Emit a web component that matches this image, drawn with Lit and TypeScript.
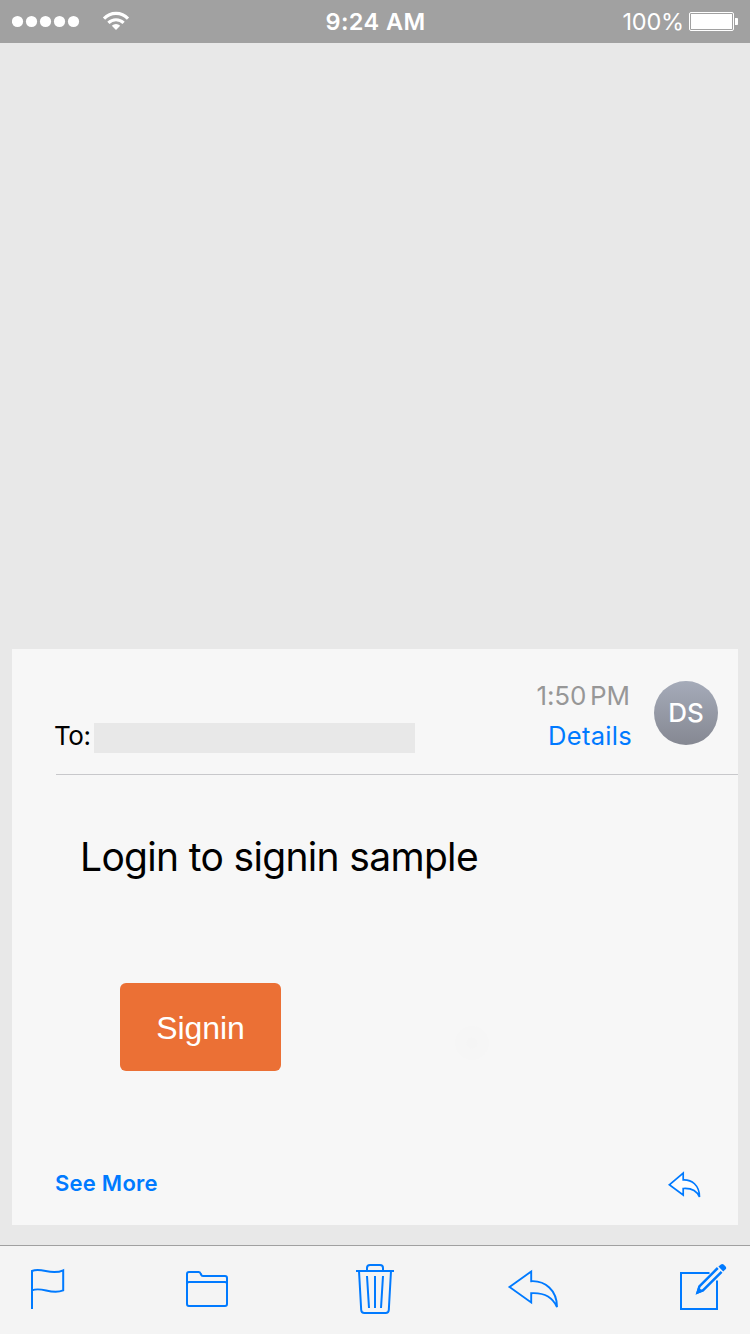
import { LitElement, html, css, svg } from "lit";
import { customElement } from "lit/decorators.js";

@customElement("status-bar")
class StatusBar extends LitElement {
  static styles = css`
    :host {
      display: grid;
      grid-template-columns: 1fr auto 1fr;
      align-items: center;
      height: 43px;
      background: #a1a1a1;
      color: #fff;
      font: 400 24px/43px Inter, "Noto Sans", sans-serif;
    }
    svg { display: block; }
    .left { display: flex; align-items: center; gap: 22px; padding-left: 12px; }
    .time { padding: 1px 0 0 1px; font-weight: 580; font-size: 23.5px; line-height: 42px; letter-spacing: 0.4px; }
    .right { display: flex; align-items: center; justify-content: flex-end; gap: 5px; padding-right: 11px; }
    .percent { padding-top: 1px; font-size: 23.5px; line-height: 42px; letter-spacing: -0.2px; }
  `;

  render() {
    return html`
      <div class="left">
        <svg width="68" height="43" viewBox="12 0 68 43" fill="#fff">
          ${[17.5, 31.5, 45.5, 59.5, 73.5].map((x) => svg`<circle cx=${x} cy="21.5" r="5.6" />`)}
        </svg>
        <svg width="28" height="43" viewBox="102 0 28 43" fill="none" stroke="#fff" stroke-width="3.1">
          <path d="M104 18.6A16.4 16.4 0 0 1 128 18.6" />
          <path d="M108.4 22.9A10.6 10.6 0 0 1 123.6 22.9" />
          <path d="M116 30L111.8 25.7A6 6 0 0 1 120.2 25.7Z" fill="#fff" stroke="none" />
        </svg>
      </div>
      <div class="time">9:24 AM</div>
      <div class="right">
        <span class="percent">100%</span>
        <svg width="50" height="43" viewBox="689 0 50 43">
          <rect x="689.5" y="12.5" width="44" height="18" rx="1.5" fill="none" stroke="#fff" />
          <rect x="691" y="14" width="41" height="15" fill="#fff" />
          <path d="M735 18h2.2q.8 0 .8.8v5.4q0 .8-.8.8H735z" fill="#fff" />
        </svg>
      </div>
    `;
  }
}

@customElement("mail-card")
class MailCard extends LitElement {
  static styles = css`
    :host {
      position: relative;
      display: flex;
      flex-direction: column;
      box-sizing: border-box;
      height: 576px;
      margin: 0 12px 20px;
      background: #f7f7f7;
      color: #000;
      font-family: Inter, "Noto Sans", sans-serif;
    }
    .header {
      display: flex;
      box-sizing: border-box;
      height: 126px;
      margin-left: 44px;
      padding: 27px 20px 0 0;
      border-bottom: 1px solid #c8c8cb;
      font-size: 26px;
      line-height: 40px;
    }
    .to { display: flex; flex: 1; align-items: center; height: 40px; margin: 40px 0 0 -2px; }
    .label { width: 40px; letter-spacing: -0.4px; }
    .redacted { width: 321px; height: 30px; margin-top: 4px; background: #e8e8e8; }
    .meta { text-align: right; margin-right: 22px; }
    .sent { color: #979797; letter-spacing: -0.1px; word-spacing: -3.4px; padding-right: 2px; }
    .details { color: #007aff; font-size: 25.5px; letter-spacing: 0.3px; }
    .avatar {
      width: 64px;
      height: 64px;
      margin-top: 5px;
      border-radius: 50%;
      background: linear-gradient(#a5abb9, #858892);
      color: #fff;
      font-weight: 500;
      line-height: 64px;
      text-align: center;
    }
    .body { display: flex; flex-direction: column; align-items: flex-start; }
    .subject { margin: 57px 0 0 68px; font-size: 39px; line-height: 50px; letter-spacing: -0.67px; }
    .signin {
      box-sizing: border-box;
      width: 161px;
      height: 88px;
      margin: 101px 0 0 108px;
      padding-top: 1px;
      border-radius: 6px;
      background: #eb7035;
      color: #fff;
      font: 32px/89px "Liberation Sans", Arial, sans-serif;
      letter-spacing: -0.1px;
      text-align: center;
    }
    .touch {
      position: absolute;
      left: 443px;
      top: 377px;
      width: 34px;
      height: 34px;
      border-radius: 50%;
      background: radial-gradient(circle, #f5f5f5 5px, #f6f6f6 6px);
    }
    .footer {
      display: flex;
      align-items: center;
      justify-content: space-between;
      height: 40px;
      margin: auto 36px 22px 43px;
      color: #007aff;
      font-size: 22px;
      font-weight: 580;
      line-height: 40px;
    }
    .more { letter-spacing: 0.25px; }
    svg { display: block; }
  `;

  render() {
    return html`
      <div class="header">
        <div class="to"><span class="label">To:</span><span class="redacted"></span></div>
        <div class="meta">
          <div class="sent">1:50 PM</div>
          <div class="details">Details</div>
        </div>
        <div class="avatar">DS</div>
      </div>
      <div class="body">
        <div class="subject">Login to signin sample</div>
        <div class="signin">Signin</div>
      </div>
      <div class="touch"></div>
      <div class="footer">
        <span class="more">See More</span>
        <svg width="36" height="40" viewBox="666 1163 36 40" fill="#fdfdfd" stroke="#007aff" stroke-width="1.7">
          <path d="M669.3 1184.8L683.2 1173V1179.8C691.5 1179.4 699.5 1185 699.5 1197C696.5 1190 690.5 1188 683.2 1188.5V1195Z" />
        </svg>
      </div>
    `;
  }
}

@customElement("mail-toolbar")
class MailToolbar extends LitElement {
  static styles = css`
    :host {
      display: grid;
      grid-template-columns: 155px 170px 152px 172px auto;
      box-sizing: border-box;
      height: 89px;
      padding-left: 28px;
      border-top: 1px solid #a0a0a0;
      background: #f4f4f4;
    }
    svg { display: block; fill: none; stroke: #007aff; stroke-width: 2; }
    .solid { fill: #007aff; stroke: none; }
    .thin { stroke-width: 1.9; }
    .pencil { stroke-width: 2.5; }
  `;

  render() {
    return html`
      <svg width="40" height="88" viewBox="28 1246 40 88">
        <path d="M32 1309V1271C42 1267 51 1276 63.2 1270.3V1290.4C51 1295.5 42 1286 32 1290.4" />
      </svg>
      <svg width="48" height="88" viewBox="183 1246 48 88">
        <path d="M187 1304V1274Q187 1272 189 1272H198.5Q200 1272 200.6 1273.5L201.3 1275Q201.8 1276 203.5 1276H225Q227 1276 227 1278V1304Q227 1306 225 1306H189Q187 1306 187 1304ZM187 1284Q187 1282 189 1282H225Q227 1282 227 1284" />
      </svg>
      <svg width="44" height="88" viewBox="353 1246 44 88">
        <path d="M356 1271H394M367 1271V1268Q367 1265 370 1265H380Q383 1265 383 1268V1271M359 1271L361.2 1310Q361.4 1313 364.4 1313H385.6Q388.6 1313 388.8 1310L391 1271M367 1276L369 1308M375 1276V1308M383 1276L381 1308" />
      </svg>
      <svg class="thin" width="56" height="88" viewBox="505 1246 56 88">
        <path d="M509.5 1287L531.2 1271.5V1281.2C545 1280.5 557 1290 557 1307C552 1296 543 1292.5 531.2 1293.2V1302.5Z" />
      </svg>
      <svg width="52" height="88" viewBox="677 1246 52 88">
        <path d="M709.5 1273H681V1309H717V1280.5" />
        <path class="pencil" d="M717.8 1268L699.4 1286.4L697.8 1292.2L703.2 1290.2L721.6 1271.8" />
        <path class="solid" d="M698.5 1286L695.5 1294.7L703.8 1291.2L701.4 1290L699.8 1288.4ZM718.4 1266.6L720.9 1264.5Q722.2 1263.5 723.6 1264.5L725.6 1266.5Q726.8 1267.9 725.6 1269.3L723.2 1271.5Z" />
      </svg>
    `;
  }
}

@customElement("app-root")
class AppRoot extends LitElement {
  static styles = css`
    :host {
      display: flex;
      flex-direction: column;
      height: 1334px;
      background: #e8e8e8;
    }
    .spacer { flex: 1; }
  `;

  render() {
    return html`
      <status-bar></status-bar>
      <div class="spacer"></div>
      <mail-card></mail-card>
      <mail-toolbar></mail-toolbar>
    `;
  }
}
